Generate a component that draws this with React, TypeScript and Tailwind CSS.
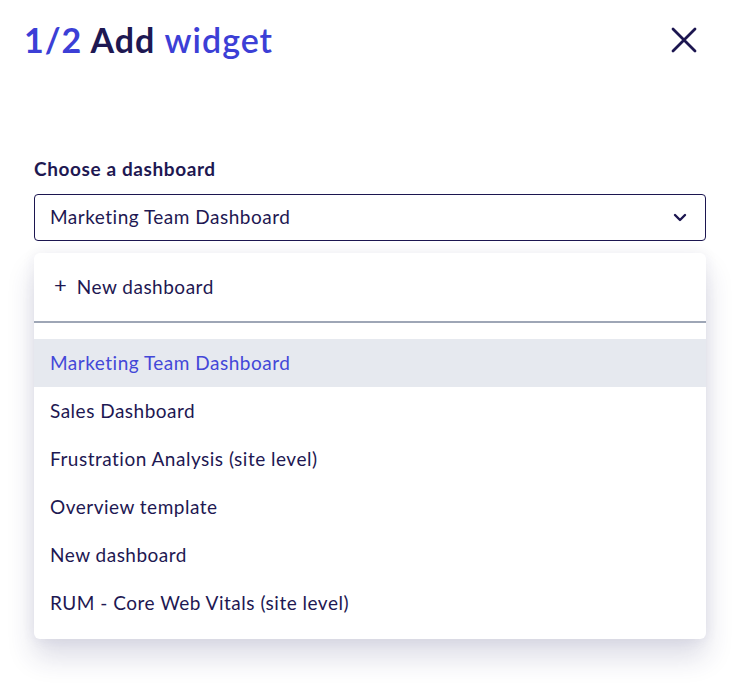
import type { FC } from "react";

const dashboards = [
  "Marketing Team Dashboard",
  "Sales Dashboard",
  "Frustration Analysis (site level)",
  "Overview template",
  "New dashboard",
  "RUM - Core Web Vitals (site level)",
];

const Chevron: FC = () => (
  <svg width="14" height="9" viewBox="0 0 14 9" fill="none">
    <path d="M2 2l5 5 5-5" stroke="#1c1650" strokeWidth="2.4" strokeLinecap="round" strokeLinejoin="round" />
  </svg>
);

export default function App() {
  const selected = dashboards[0];

  return (
    <div className="min-h-[684px] w-[746px] bg-white font-['Lato',sans-serif] text-[#1e1852]">
      <div className="flex items-center justify-between pl-[24px] pr-[48px] pt-[20px]">
        <h1 className="text-[34px] leading-[40px] font-bold tracking-[1px]">
          <span className="text-[#3c3fd6]">1/2</span> <span>Add</span>{" "}
          <span className="font-semibold text-[#3c3fd6]">widget</span>
        </h1>
        <button className="flex h-[28px] w-[28px] items-center justify-center">
          <svg width="26" height="26" viewBox="0 0 26 26">
            <path d="M2 2l22 22M24 2L2 24" stroke="#1c1650" strokeWidth="2.8" strokeLinecap="round" />
          </svg>
        </button>
      </div>

      <div className="mt-[98px] pl-[34px] pr-[40px]">
        <p className="mb-[14px] text-[19px] leading-[22px] font-bold tracking-[0.6px]">Choose a dashboard</p>

        <div className="flex h-[47px] items-center justify-between rounded-[4px] border border-[#1c1650] pl-[15px] pr-[18px]">
          <span className="text-[19px] tracking-[0.5px]">{selected}</span>
          <Chevron />
        </div>

        <div className="mt-[12px] rounded-[6px] bg-white shadow-[0_18px_28px_rgba(40,40,100,0.16),0_0_14px_rgba(40,40,100,0.07)]">
          <div className="flex h-[68px] items-center gap-[10px] pl-[20px]">
            <span className="text-[22px] leading-none -mt-[4px]">+</span>
            <span className="text-[19px] tracking-[0.5px]">New dashboard</span>
          </div>
          <div className="h-[2px] bg-[#9ea6b6]" />
          <ul className="pt-[16px] pb-[12px] text-[19px] tracking-[0.5px]">
            {dashboards.map((name) => (
              <li
                key={name}
                className={
                  name === selected
                    ? "flex h-[48px] items-center bg-[#e6e9ef] pl-[16px] text-[#4347d8]"
                    : "flex h-[48px] items-center pl-[16px]"
                }
              >
                {name}
              </li>
            ))}
          </ul>
        </div>
      </div>
    </div>
  );
}
